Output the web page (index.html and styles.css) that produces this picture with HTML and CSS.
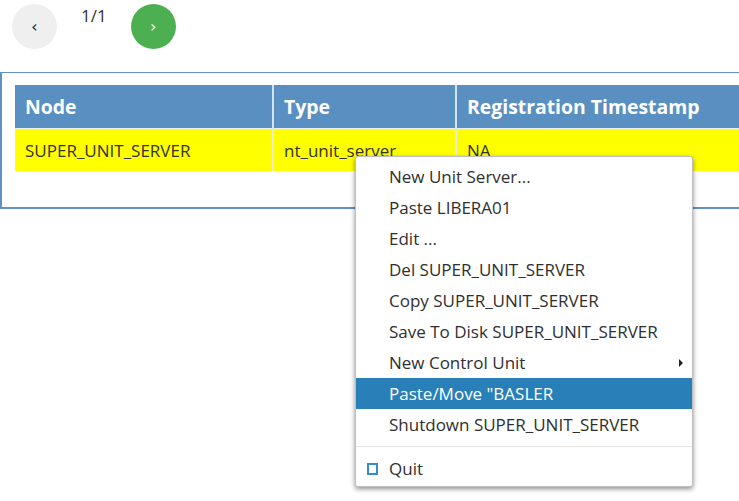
FILE: index.html
```html
<!DOCTYPE html>
<html>
<head>
<meta charset="utf-8">
<link rel="stylesheet" href="styles.css">
</head>
<body>
<div class="pager">
  <button class="pbtn prev">&lsaquo;</button>
  <span class="pcount">1/1</span>
  <button class="pbtn next">&rsaquo;</button>
</div>
<div class="panel">
  <table class="grid">
    <colgroup>
      <col class="c1"><col class="c2"><col class="c3">
    </colgroup>
    <thead>
      <tr><th>Node</th><th>Type</th><th>Registration Timestamp</th></tr>
    </thead>
    <tbody>
      <tr class="sel"><td>SUPER_UNIT_SERVER</td><td>nt_unit_server</td><td>NA</td></tr>
    </tbody>
  </table>
</div>
<ul class="ctx">
  <li class="item">New Unit Server...</li>
  <li class="item">Paste LIBERA01</li>
  <li class="item">Edit ...</li>
  <li class="item">Del SUPER_UNIT_SERVER</li>
  <li class="item">Copy SUPER_UNIT_SERVER</li>
  <li class="item">Save To Disk SUPER_UNIT_SERVER</li>
  <li class="item sub">New Control Unit</li>
  <li class="item hover">Paste/Move "BASLER</li>
  <li class="item">Shutdown SUPER_UNIT_SERVER</li>
  <li class="sep"></li>
  <li class="item quit"><span class="chk"></span>Quit</li>
</ul>
</body>
</html>
```
FILE: styles.css
```css
html, body {
  margin: 0;
  padding: 0;
  background: #fff;
  overflow: hidden;
  font-family: "Open Sans", "DejaVu Sans", sans-serif;
  color: #333;
}
body {
  width: 739px;
  height: 501px;
  position: relative;
}
.pager {
  display: flex;
  align-items: flex-start;
  padding: 4px 0 0 12px;
  height: 68px;
  box-sizing: border-box;
}
.pbtn {
  width: 45px;
  height: 45px;
  border-radius: 50%;
  border: none;
  padding: 0 0 2px 0;
  font-family: "DejaVu Sans", sans-serif;
  font-size: 16px;
  line-height: 45px;
  text-align: center;
}
.prev {
  background: #efefef;
  color: #222;
}
.next {
  background: #4caf50;
  color: #fff;
}
.pcount {
  font-size: 17px;
  line-height: 22px;
  padding-top: 1px;
  margin: 0 24px 0 24px;
  color: #333;
}
.panel {
  margin-top: 4px;
  width: 739px;
  height: 137px;
  box-sizing: border-box;
  border: 1px solid #5e92c6;
  border-right: none;
  border-left-width: 2px;
  border-bottom-width: 2px;
  padding: 12px 0 0 13px;
  overflow: hidden;
}
.grid {
  border-collapse: collapse;
  table-layout: fixed;
  width: 760px;
}
.c1 { width: 258px; }
.c2 { width: 183px; }
.c3 { width: 319px; }
.grid th {
  background: #5a8fc1;
  color: #fff;
  font-weight: 700;
  font-size: 19.4px;
  text-align: left;
  height: 43px;
  padding: 0 10px;
  border-right: 2px solid #d6e2ee;
  border-bottom: 1px solid #e8eef4;
}
.grid td {
  background: #ffff00;
  font-size: 17px;
  height: 42px;
  padding: 0 10px;
  border-right: 2px solid #e9ecd0;
  color: #333;
}
.ctx {
  position: absolute;
  left: 355px;
  top: 156px;
  width: 338px;
  box-sizing: border-box;
  margin: 0;
  padding: 4px 0 2px 0;
  list-style: none;
  background: #fff;
  border: 1px solid #bebebe;
  border-radius: 3px;
  box-shadow: 0 2px 5px rgba(0, 0, 0, 0.45);
}
.item {
  position: relative;
  height: 31px;
  line-height: 31px;
  padding-left: 33px;
  font-size: 17px;
  color: #2f2f2f;
  white-space: nowrap;
}
.hover {
  background: #2980b9;
  color: #fff;
}
.sub::after {
  content: "";
  position: absolute;
  right: 9px;
  top: 12px;
  border-left: 4px solid #222;
  border-top: 4px solid transparent;
  border-bottom: 4px solid transparent;
}
.sep {
  height: 0;
  margin: 6px 0;
  border-bottom: 1px solid #e6e6e6;
}
.chk {
  position: absolute;
  left: 11px;
  top: 10px;
  width: 7px;
  height: 8px;
  border: 2px solid #3a8cc8;
}
```
